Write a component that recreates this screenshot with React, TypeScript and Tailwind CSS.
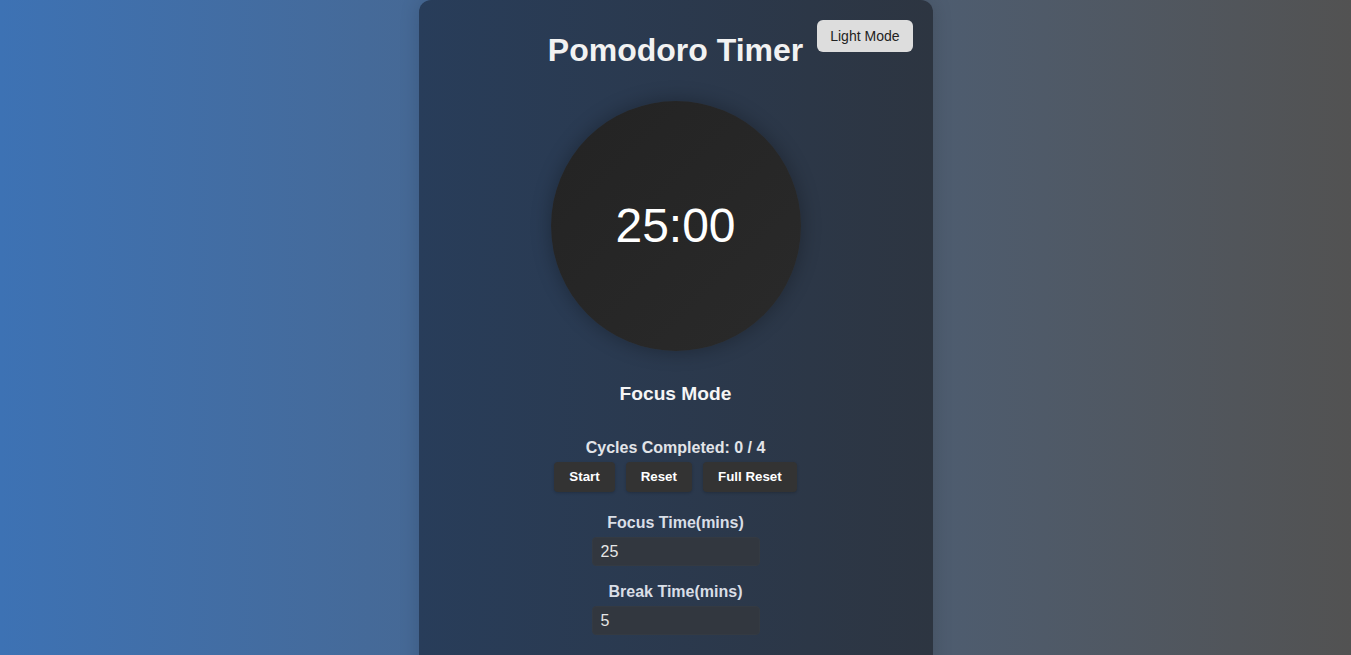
import { useState } from "react";

const buttons = ["Start", "Reset", "Full Reset"];

export default function App() {
  const [focus, setFocus] = useState("25");
  const [rest, setRest] = useState("5");

  return (
    <div
      className="flex h-screen justify-center overflow-hidden bg-gradient-to-r from-[#3d72b4] to-[#525252]"
      style={{ fontFamily: '"Liberation Sans", Arial, sans-serif' }}
    >
      <div className="relative flex h-[720px] w-[514px] flex-col items-center rounded-xl bg-gradient-to-r from-[#283d5a] to-[#2d3541] pt-8 shadow-[0_0_20px_rgba(0,0,0,0.15)]">
        <button className="absolute right-5 top-5 h-8 rounded-md bg-[#dddddd] px-[13px] text-[14px] text-[#222]">
          Light Mode
        </button>

        <h1 className="text-[32px] font-bold leading-[37px] text-[#f2f2f2]">Pomodoro Timer</h1>

        <div className="mt-8 flex h-[250px] w-[250px] items-center justify-center rounded-full bg-gradient-to-br from-[#232323] to-[#2a2a2a] shadow-[0_0_20px_rgba(0,0,0,0.3)]">
          <span className="text-[48px] leading-none text-white">25:00</span>
        </div>

        <h2 className="mt-[32px] text-[19.2px] font-bold leading-[22px] text-[#f5f5f5]">Focus Mode</h2>

        <p className="mt-[34px] text-base font-bold leading-[18px] text-[#e2e4e8]">Cycles Completed: 0 / 4</p>

        <div className="mt-[5px] flex gap-[11px]">
          {buttons.map((b) => (
            <button
              key={b}
              className="h-[30px] rounded-[4px] bg-[#333333] px-[15px] text-[13.33px] font-bold text-white shadow-[0_1px_3px_rgba(0,0,0,0.2)]"
            >
              {b}
            </button>
          ))}
        </div>

        <label className="mt-[22px] text-base font-bold leading-[18px] text-[#d9dee6]">Focus Time(mins)</label>
        <input
          value={focus}
          onChange={(e) => setFocus(e.target.value)}
          className="mt-[5px] h-[29px] w-[168px] rounded-[4px] border border-[#343a42] bg-[#32373f] px-2 text-base text-[#e6e6e6] outline-none"
        />

        <label className="mt-[17px] text-base font-bold leading-[18px] text-[#d9dee6]">Break Time(mins)</label>
        <input
          value={rest}
          onChange={(e) => setRest(e.target.value)}
          className="mt-[5px] h-[29px] w-[168px] rounded-[4px] border border-[#343a42] bg-[#32373f] px-2 text-base text-[#e6e6e6] outline-none"
        />
      </div>
    </div>
  );
}
